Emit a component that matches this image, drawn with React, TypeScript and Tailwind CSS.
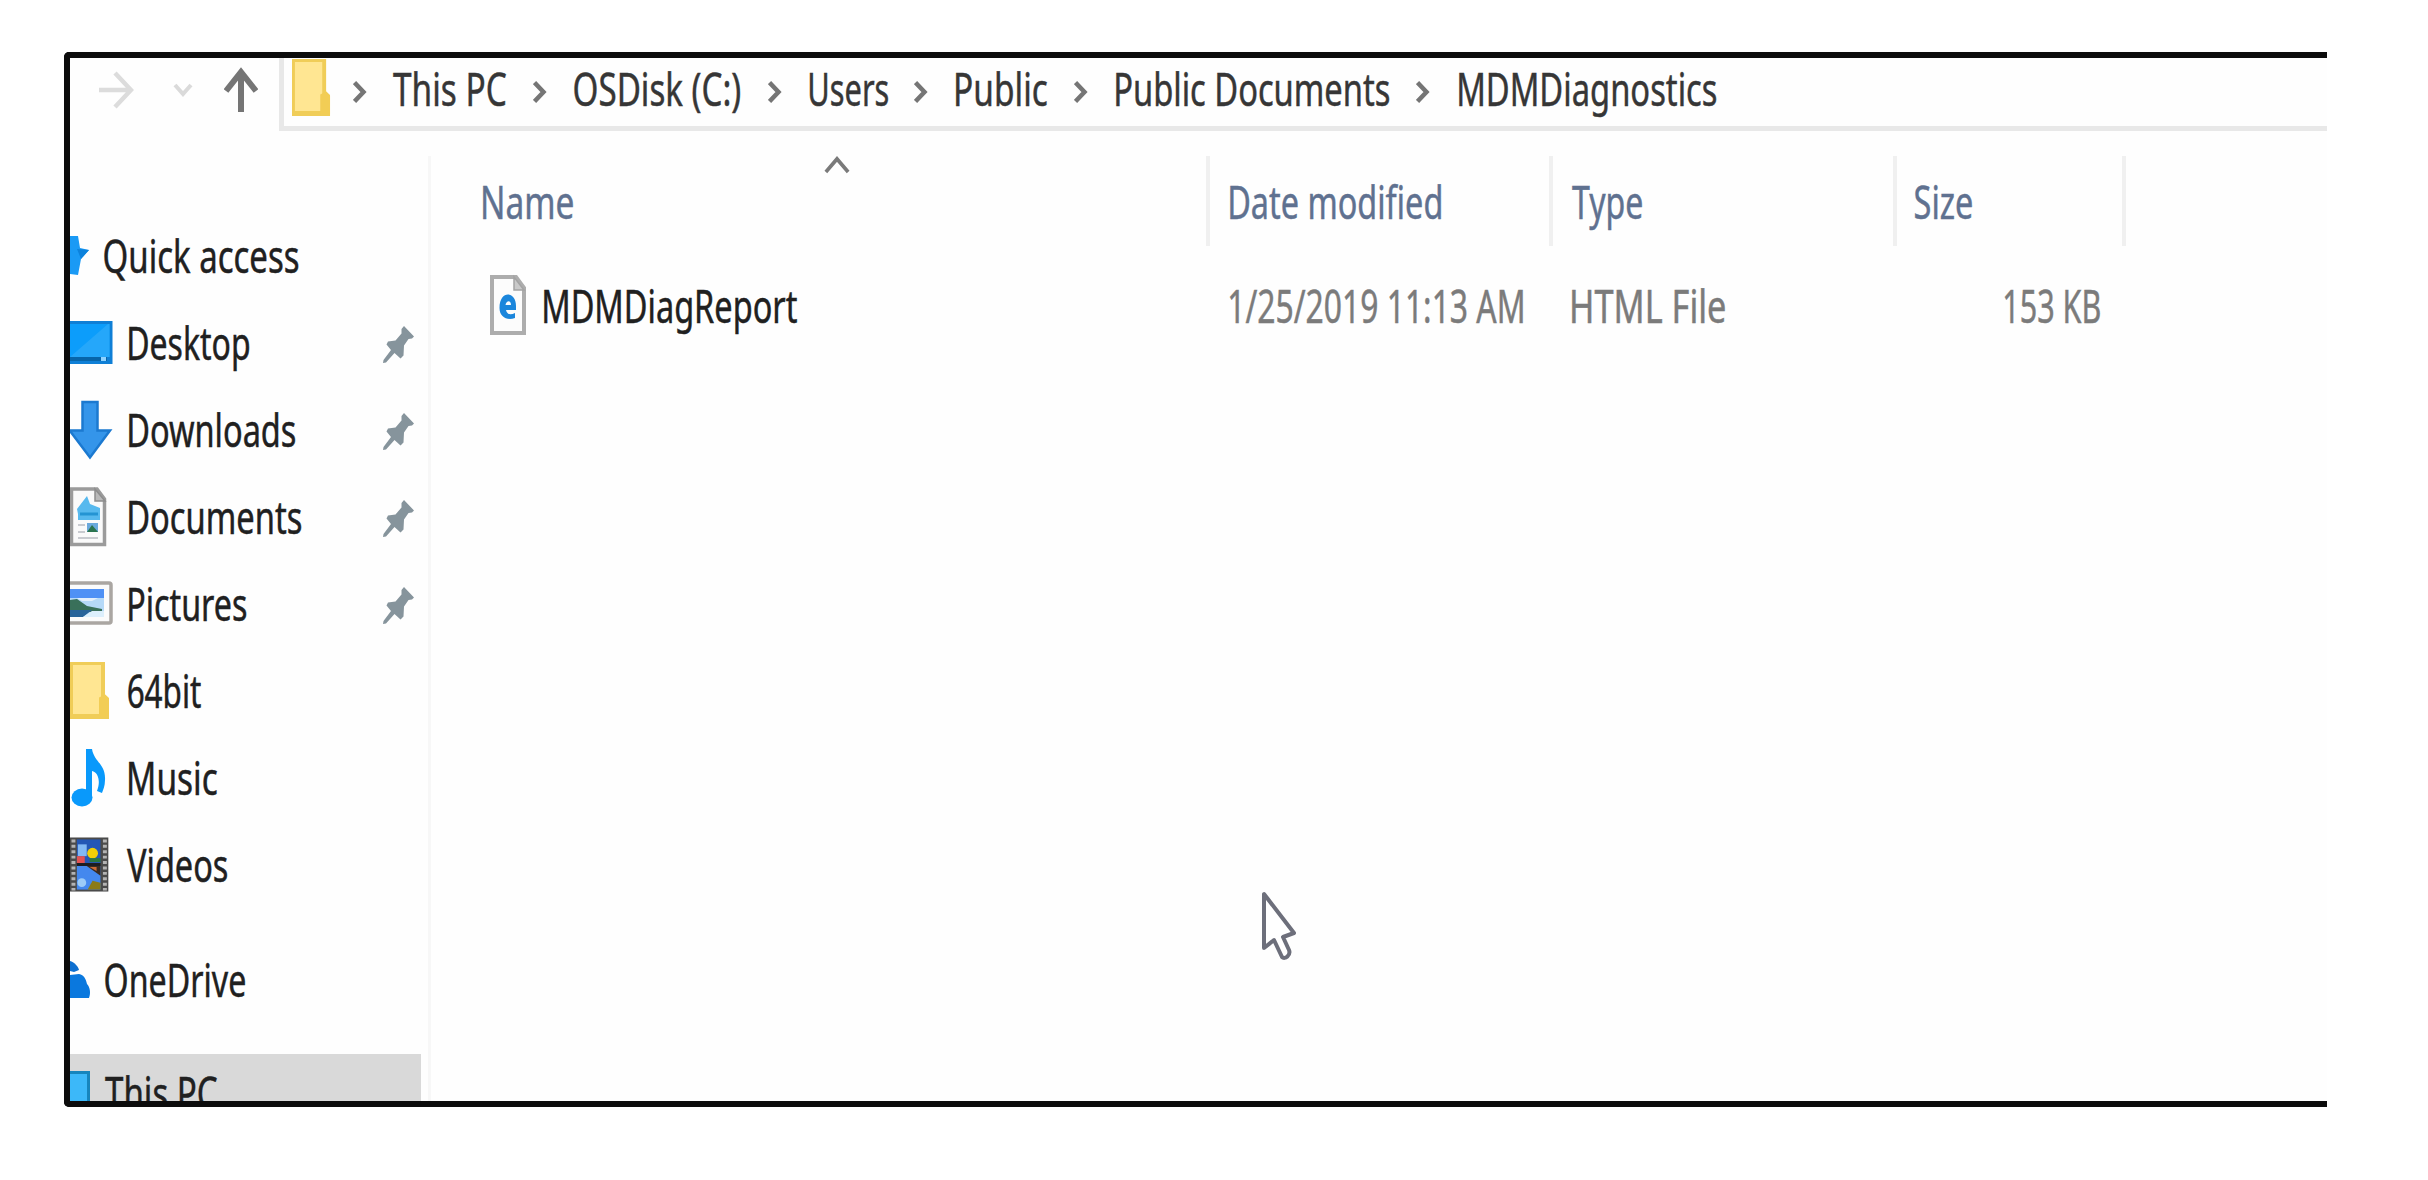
import { useLayoutEffect, useRef, type ReactNode } from "react";

const FONT = '46px "Noto Sans"';

// Condensed label: squeezes its text so that the glyphs fill the box's width.
function Label({ text, className }: { text: string; className: string }) {
  const box = useRef<HTMLDivElement>(null);
  const inner = useRef<HTMLSpanElement>(null);
  useLayoutEffect(() => {
    const ctx = document.createElement("canvas").getContext("2d");
    if (!ctx || !box.current || !inner.current) return;
    ctx.font = FONT;
    const m = ctx.measureText(text);
    const left = -m.actualBoundingBoxLeft;
    const scale = box.current.clientWidth / (m.actualBoundingBoxRight - left);
    inner.current.style.transform = `translateX(${-left * scale}px) scaleX(${scale})`;
  }, [text]);
  return (
    <div ref={box} className={`shrink-0 whitespace-nowrap ${className}`}>
      <span ref={inner} className="inline-block origin-left">
        {text}
      </span>
    </div>
  );
}

function Crumb({ className }: { className: string }) {
  return (
    <svg className={`h-[26px] w-[16px] shrink-0 ${className}`} viewBox="0 0 16 26" fill="none" stroke="#757575" strokeWidth="4.5">
      <path d="M1.500 3.500L10.500 13L1.500 22.500" />
    </svg>
  );
}

function Pin() {
  return (
    <svg className="h-[42px] w-[34px] shrink-0" viewBox="0 0 34 42">
      <path d="M22 2L32 12.500L30 14.500L26.500 15L22 21.500L21.500 31.500L18.500 34.500L12.500 29L4 38.500L1 39L1.500 36L9 26L4.500 20.500L6 17.500L13.500 16.500L19.500 9.500L19.500 5Z" fill="#86949c" />
    </svg>
  );
}

function Star() {
  return (
    <svg className="h-[44px] w-[33px]" viewBox="0 0 33 44">
      <path d="M0 2H8L10 14L19 16L11 25L8 41L0 40Z" fill="#1a9af5" />
      <path d="M7 15L19 16L11 25Z" fill="#0c82dc" />
    </svg>
  );
}

function Desktop() {
  return (
    <svg className="h-[48px] w-[58px]" viewBox="0 0 58 48">
      <rect x="-2" y="2" width="44.500" height="43" fill="#0f7fd6" />
      <rect x="-2" y="5" width="41.500" height="33" fill="#0c9dfb" />
      <path d="M0 38L38 5H39.500V38Z" fill="#25a7fa" />
      <rect x="0" y="38" width="37" height="4" fill="#0765aa" />
      <rect x="31" y="38" width="5" height="4" fill="#8ed2ff" />
    </svg>
  );
}

function Download() {
  return (
    <svg className="h-[60px] w-[58px]" viewBox="0 0 58 60">
      <path d="M12.500 2H27.500V30.500H40L20 57.500L0 31V30.500H12.500Z" fill="#3495ea" stroke="#1b79d0" strokeWidth="2.500" />
    </svg>
  );
}

function Documents() {
  return (
    <svg className="h-[62px] w-[58px]" viewBox="0 0 58 62">
      <path d="M1.500 3H27L34.500 13V58.500H1.500Z" fill="#fafafa" stroke="#9b9b9b" strokeWidth="3.500" />
      <path d="M25 3V15H35Z" fill="#b9b9b9" stroke="#8d8d8d" strokeWidth="1.500" />
      <path d="M7 23L17 10L20 18L30 22V34H8V28Z" fill="#57b9ee" />
      <path d="M10 28H28" stroke="#2494d3" strokeWidth="3" />
      <path d="M8 39H15M8 46H15M8 52H28" stroke="#c9cbd0" strokeWidth="2" />
      <rect x="17" y="37" width="11" height="9" fill="#6aa9dc" />
      <path d="M17 46L22 39L28 46Z" fill="#2b744e" />
    </svg>
  );
}

function Pictures() {
  return (
    <svg className="h-[48px] w-[58px]" viewBox="0 0 58 48">
      <rect x="-2" y="3" width="43" height="40" rx="2" fill="#fbfbfb" stroke="#aaa6a2" strokeWidth="3.500" />
      <rect x="0" y="9" width="34" height="28" fill="#b5d9f8" />
      <rect x="0" y="9" width="34" height="9" fill="#4f91f5" />
      <path d="M7 18H28L22 21H12Z" fill="#e4f0fc" />
      <path d="M0 20L7 19L17 26L32 29V32H0Z" fill="#39705a" />
      <path d="M0 30H22L13 37H0Z" fill="#28649a" />
      <path d="M22 31H34V37H13Z" fill="#dceffc" />
    </svg>
  );
}

function Folder({ className }: { className: string }) {
  return (
    <svg className={className} viewBox="0 0 40 60" preserveAspectRatio="none">
      <path d="M0 1H35V34L39 38V59H0Z" fill="#f0cd58" />
      <path d="M3 4H31V54H3Z" fill="#ffe692" />
      <path d="M29 37L35 34L39 38V57H29Z" fill="#f2cd55" />
    </svg>
  );
}

function Music() {
  return (
    <svg className="h-[62px] w-[58px]" viewBox="0 0 58 62">
      <ellipse cx="12" cy="50.500" rx="10.500" ry="9" fill="#0999fb" />
      <path d="M16 2H22C24 15 36 17 35 33C35 39 33 43 32 46L27 44C31 34 28 25 22 24V51H16Z" fill="#0999fb" />
    </svg>
  );
}

function Videos() {
  return (
    <svg className="h-[58px] w-[58px]" viewBox="0 0 58 58">
      <rect x="0" y="1" width="39" height="55" fill="#4a4a4a" />
      <path d="M3.500 3V55M35.500 3V55" stroke="#b3b3b3" strokeWidth="4" strokeDasharray="3 2.500" />
      <rect x="7" y="3" width="24" height="24" fill="#2457b5" />
      <rect x="8" y="8" width="9" height="12" fill="#82b9f4" />
      <circle cx="23" cy="17" r="5.500" fill="#f1cf06" />
      <rect x="20" y="22" width="11" height="4" fill="#297640" />
      <rect x="7" y="20" width="8" height="7" fill="#e25353" />
      <rect x="7" y="27" width="24" height="3" fill="#1c1d20" />
      <rect x="7" y="30" width="24" height="24" fill="#4488ee" />
      <path d="M17 30H31V40Z" fill="#3a2c22" />
      <path d="M20 31H27V35Z" fill="#ce6b35" />
      <circle cx="12" cy="47" r="4.500" fill="#9ccbf7" />
      <path d="M18 54L23 45L31 47V54Z" fill="#8b7b17" />
    </svg>
  );
}

function OneDrive() {
  return (
    <svg className="h-[40px] w-[33px]" viewBox="0 0 33 40">
      <path d="M0 1C4 2 8 6 9 10L4 12L0 11Z" fill="#0d6fd0" />
      <path d="M0 15L9 14C14 15 16 19 17 24C20 27 21 33 19 38H0Z" fill="#0a78de" />
    </svg>
  );
}

function NavRow({ icon, iconWidth, pinned, children }: { icon: ReactNode; iconWidth: string; pinned?: boolean; children: ReactNode }) {
  return (
    <div className="flex h-[87px] items-center">
      <div className={`flex shrink-0 items-center ${iconWidth}`}>{icon}</div>
      {children}
      {pinned && (
        <div className="ml-auto pt-1 pr-[5px]">
          <Pin />
        </div>
      )}
    </div>
  );
}

function Column({ width, children }: { width: string; children: ReactNode }) {
  return <div className={`relative flex h-[90px] shrink-0 items-start border-r-[4px] border-[#f0f0f0] pt-[5px] leading-[80px] ${width}`}>{children}</div>;
}

export default function App() {
  return (
    <div className="h-[1180px] w-[2428px] overflow-hidden bg-white pt-[52px] pl-[64px] font-['Noto_Sans',sans-serif] text-[46px] text-[#202020] [-webkit-text-stroke-width:0.5px]">
      <div className="relative flex h-[1055px] w-[2263px] flex-col overflow-hidden rounded-l-[5px] border-y-[6px] border-l-[6px] border-[#0c0c0c] bg-[#fefefe]">
        <header className="flex h-[73px] shrink-0 leading-[60px]">
          <div className="flex h-[64px] w-[209px] shrink-0 items-center">
            <svg className="ml-[28px] h-[40px] w-[36px]" viewBox="0 0 36 40" fill="none" stroke="#dcdcdc" strokeWidth="4.500">
              <path d="M1 20H32M17 3L33 20L17 37" />
            </svg>
            <svg className="ml-[39px] h-[16px] w-[20px]" viewBox="0 0 20 16" fill="none" stroke="#dadada" strokeWidth="4">
              <path d="M2 3L10 12L18 3" />
            </svg>
            <svg className="ml-[31px] h-[48px] w-[34px]" viewBox="0 0 34 48" fill="none" stroke="#757575" strokeWidth="6">
              <path d="M17 46V5M2 25L17 6L32 25" />
            </svg>
          </div>
          <nav className="flex h-[73px] grow items-start border-b-[5px] border-l-[5px] border-[#e8e8e8] text-[#363636]">
            <Folder className="ml-[8px] h-[59px] w-[39px] shrink-0" />
            <Crumb className="mt-[21px] ml-[22px]" />
            <Label text="This PC" className="ml-[24px] w-[113px]" />
            <Crumb className="mt-[21px] ml-[27px]" />
            <Label text="OSDisk (C:)" className="ml-[25px] w-[166px]" />
            <Crumb className="mt-[21px] ml-[28px]" />
            <Label text="Users" className="ml-[26px] w-[78px]" />
            <Crumb className="mt-[21px] ml-[26px]" />
            <Label text="Public" className="ml-[26px] w-[91px]" />
            <Crumb className="mt-[21px] ml-[27px]" />
            <Label text="Public Documents" className="ml-[26px] w-[273px]" />
            <Crumb className="mt-[21px] ml-[27px]" />
            <Label text="MDMDiagnostics" className="ml-[27px] w-[257px]" />
          </nav>
        </header>

        <div className="flex grow pt-[25px]">
          <aside className="flex w-[361px] shrink-0 flex-col border-r-[3px] border-[#f7f7f7] pt-[56px] leading-[87px]">
            <div className="w-[351px]">
              <NavRow iconWidth="w-[34px]" icon={<Star />}>
                <Label text="Quick access" className="w-[194px]" />
              </NavRow>
              <NavRow iconWidth="w-[59px]" pinned icon={<Desktop />}>
                <Label text="Desktop" className="w-[120px]" />
              </NavRow>
              <NavRow iconWidth="w-[59px]" pinned icon={<Download />}>
                <Label text="Downloads" className="w-[166px]" />
              </NavRow>
              <NavRow iconWidth="w-[59px]" pinned icon={<Documents />}>
                <Label text="Documents" className="w-[172px]" />
              </NavRow>
              <NavRow iconWidth="w-[59px]" pinned icon={<Pictures />}>
                <Label text="Pictures" className="w-[117px]" />
              </NavRow>
              <NavRow iconWidth="w-[58px]" icon={<Folder className="h-[59px] w-[40px]" />}>
                <Label text="64bit" className="w-[73px]" />
              </NavRow>
              <NavRow iconWidth="w-[59px]" icon={<Music />}>
                <Label text="Music" className="w-[88px]" />
              </NavRow>
              <NavRow iconWidth="w-[57px]" icon={<Videos />}>
                <Label text="Videos" className="w-[100px]" />
              </NavRow>
            </div>
            <div className="mt-[28px] w-[351px]">
              <NavRow iconWidth="w-[35px]" icon={<OneDrive />}>
                <Label text="OneDrive" className="w-[140px]" />
              </NavRow>
            </div>
            <div className="mt-[31px] flex h-[47px] w-[351px] items-start overflow-hidden bg-[#d9d9d9] leading-[77px]">
              <svg className="mt-[17px] h-[40px] w-[35px] shrink-0" viewBox="0 0 35 40">
                <rect x="0" y="0" width="20" height="40" fill="#1685bd" />
                <rect x="0" y="3" width="17" height="37" fill="#3cb8f9" />
              </svg>
              <Label text="This PC" className="w-[112px]" />
            </div>
          </aside>

          <main className="grow">
            <div className="flex text-[#5f7190]">
              <Column width="w-[779px] pl-[52px]">
                <Label text="Name" className="w-[90px]" />
                <svg className="absolute top-0 left-[393px] h-[18px] w-[26px]" viewBox="0 0 28 18" fill="none" stroke="#7a7a7a" strokeWidth="4" preserveAspectRatio="none">
                  <path d="M2 16L14 3L26 16" />
                </svg>
              </Column>
              <Column width="w-[343px] pl-[20px]">
                <Label text="Date modified" className="w-[211px]" />
              </Column>
              <Column width="w-[344px] pl-[19px]">
                <Label text="Type" className="w-[70px]" />
              </Column>
              <Column width="w-[229px] pl-[18px]">
                <Label text="Size" className="w-[57px]" />
              </Column>
            </div>
            <div className="mt-[18px] flex h-[82px] items-center leading-[82px] text-[#7b7b7b]">
              <div className="flex w-[799px] shrink-0 items-center pl-[59px] text-[#202020]">
                <svg className="mr-[17px] h-[62px] w-[37px] shrink-0" viewBox="0 0 37 62">
                  <path d="M2 3H26L34 14V59H2Z" fill="#fcfcfc" stroke="#adadad" strokeWidth="4" />
                  <path d="M24 3V16H34Z" fill="#c9c9c9" stroke="#a3a3a3" strokeWidth="1.500" />
                  <path d="M9.500 34C9.500 16 26 17 26 32V36H16C17 41 21 41 25 39V44C17 47 9.500 43 9.500 34ZM15.500 31H21C21 26 16.500 26 15.500 31Z" fill="#1b86dc" fillRule="evenodd" />
                </svg>
                <Label text="MDMDiagReport" className="w-[253px]" />
              </div>
              <Label text="1/25/2019 11:13 AM" className="w-[293px]" />
              <Label text="HTML File" className="ml-[49px] w-[153px]" />
              <Label text="153 KB" className="ml-[280px] w-[95px]" />
            </div>
          </main>
        </div>

        <svg className="absolute top-[830px] left-[1190px] h-[74px] w-[42px]" viewBox="0 0 42 74" fill="#ffffff" stroke="#6d6f7b" strokeWidth="4" strokeLinejoin="round">
          <path d="M4 6V60L14 52L22 69C25 72 31 67 29 62L23 49L34 45Z" />
        </svg>
      </div>
    </div>
  );
}
